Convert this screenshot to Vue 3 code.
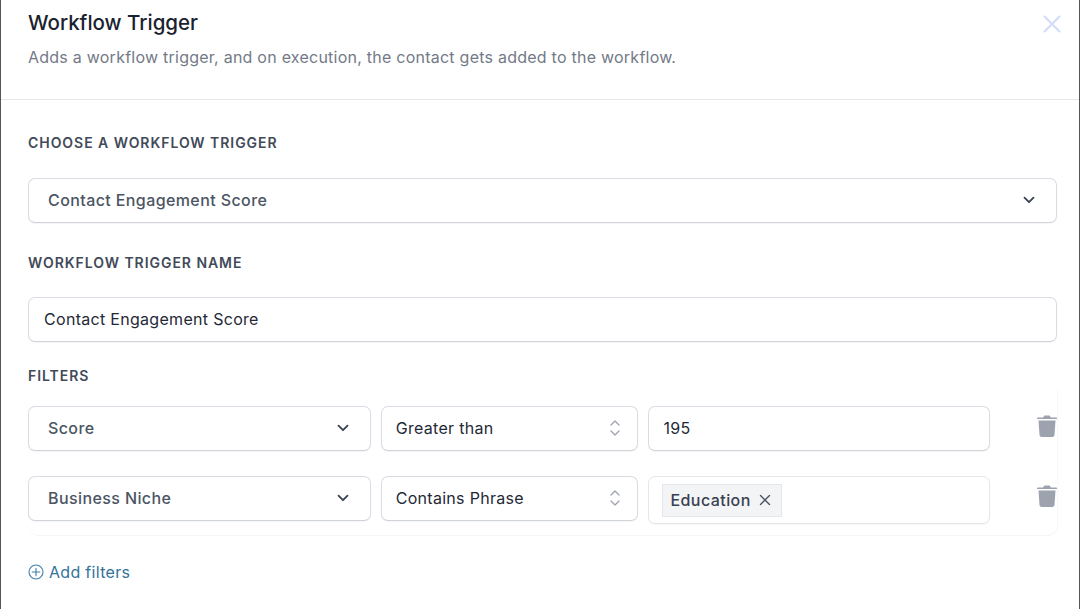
<script setup>
const filters = [
  { field: 'Score', op: 'Greater than', value: '195' },
  { field: 'Business Niche', op: 'Contains Phrase', tag: 'Education' },
]
</script>

<template>
  <div class="frame">
    <header class="head">
      <div>
        <h1 class="title">Workflow Trigger</h1>
        <p class="sub">Adds a workflow trigger, and on execution, the contact gets added to the workflow.</p>
      </div>
      <svg class="close" viewBox="0 0 18 18" width="18" height="18" fill="none" stroke="#d3dcf8" stroke-width="2" stroke-linecap="round">
        <path d="M1.5 1.5l15 15M16.5 1.5l-15 15" />
      </svg>
    </header>
    <main class="body">
      <div class="label first">CHOOSE A WORKFLOW TRIGGER</div>
      <div class="box select main-select">
        <span class="muted">Contact Engagement Score</span>
        <svg class="chev" viewBox="0 0 12 8" width="12" height="8" fill="none" stroke="#374151" stroke-width="1.8" stroke-linecap="round" stroke-linejoin="round"><path d="M1.5 1.7L6 6.2l4.5-4.5" /></svg>
      </div>
      <div class="label second">WORKFLOW TRIGGER NAME</div>
      <div class="box name-input">Contact Engagement Score</div>
      <div class="label third">FILTERS</div>
      <div class="filters">
        <div v-for="f in filters" :key="f.field" class="row">
          <div class="box select field">
            <span class="muted">{{ f.field }}</span>
            <svg class="chev" viewBox="0 0 12 8" width="12" height="8" fill="none" stroke="#374151" stroke-width="1.8" stroke-linecap="round" stroke-linejoin="round"><path d="M1.5 1.7L6 6.2l4.5-4.5" /></svg>
          </div>
          <div class="box op">
            <span>{{ f.op }}</span>
            <svg viewBox="0 0 10 18" width="10" height="18" fill="none" stroke="#9ca3af" stroke-width="1.3" stroke-linecap="round" stroke-linejoin="round"><path d="M1 6l4-4 4 4M1 12l4 4 4-4" /></svg>
          </div>
          <div class="box value" :class="{ 'value-tags': f.tag }">
            <span v-if="f.tag" class="tag">{{ f.tag }}
              <svg viewBox="0 0 12 12" width="12" height="12" fill="none" stroke="#4b5563" stroke-width="1.4" stroke-linecap="round"><path d="M1.5 1.5l9 9M10.5 1.5l-9 9" /></svg>
            </span>
            <span v-else>{{ f.value }}</span>
          </div>
          <svg class="trash" viewBox="0 0 20 24" width="20" height="24" fill="#9ca3af">
            <path d="M7.5 1.5h5L14 3.5h5.2c.5 0 .8.4.8.8v.7H0v-.7c0-.4.3-.8.8-.8H6z" />
            <path d="M1.5 6.5h17l-1 14.6c-.1 1-.9 1.9-2 1.9h-11c-1.100 0-1.900-.9-2-1.900z" />
          </svg>
        </div>
      </div>
      <div class="add">
        <svg viewBox="0 0 16 16" width="16" height="16" fill="none" stroke="#3f7ea6" stroke-width="1.100" stroke-linecap="round"><circle cx="8" cy="8" r="7" /><path d="M8 4.200v7.600M4.200 8h7.600" /></svg>
        <span>Add filters</span>
      </div>
    </main>
  </div>
</template>

<style scoped>
.frame {
  width: 1080px;
  height: 609px;
  box-sizing: border-box;
  border-left: 1px solid #555;
  border-right: 1px solid #555;
  background: #fff;
  font-family: Inter, "Liberation Sans", sans-serif;
  overflow: hidden;
}
.head {
  height: 100px;
  box-sizing: border-box;
  border-bottom: 1px solid #e5e7eb;
  padding: 10px 18px 0 27px;
  display: flex;
  justify-content: space-between;
  align-items: flex-start;
}
.title {
  margin: 0;
  font-size: 20.500px;
  line-height: 26px;
  font-weight: 500;
  color: #1a2230;
}
.sub {
  margin: 9px 0 0;
  font-size: 16px;
  line-height: 24px;
  letter-spacing: 0.24px;
  color: #737a87;
}
.close { margin-top: 5px; }
.body {
  padding: 0 22px 0 27px;
}
.label {
  font-size: 14px;
  line-height: 18px;
  font-weight: 600;
  letter-spacing: 0.95px;
  color: #414a59;
}
.first { padding-top: 34px; }
.second { margin-top: 31px; }
.third { margin-top: 25px; }
.box {
  box-sizing: border-box;
  height: 45px;
  padding-bottom: 1px;
  border: 1px solid #d9dce2;
  border-bottom-color: #cfd3da;
  border-radius: 7px;
  background: #fff;
  box-shadow: 0 1px 1px rgba(0, 0, 0, 0.04);
  display: flex;
  align-items: center;
  font-size: 16px;
  letter-spacing: 0.3px;
  color: #1f2937;
}
.select {
  justify-content: space-between;
  padding: 0 21px 1px 19px;
}
.muted { color: #4b5563; font-weight: 500; letter-spacing: 0.4px; }
.main-select { margin-top: 26px; }
.name-input { margin-top: 25px; padding-left: 15px; }
.filters {
  margin-top: 5px;
  margin-right: -1px;
  padding: 16px 0 11px;
  border-right: 1px solid #f6f7f8;
  border-bottom: 1px solid #f3f4f6;
  border-radius: 0 0 10px 10px;
  display: flex;
  flex-direction: column;
  gap: 25px;
}
.row {
  display: flex;
  align-items: flex-start;
  gap: 10px;
}
.field { width: 343px; }
.op {
  width: 258px;
  padding: 0 17px 1px 14px;
  justify-content: space-between;
}
.value {
  width: 342px;
  padding-left: 14px;
}
.value-tags {
  height: 48px;
  padding-left: 13px;
  padding-bottom: 0;
  border-color: #e5e7eb;
}
.tag {
  display: inline-flex;
  align-items: center;
  gap: 8px;
  height: 33px;
  box-sizing: border-box;
  padding: 0 10px 0 7px;
  background: #f3f4f6;
  border: 1px solid #e5e7eb;
  color: #374151;
  font-weight: 500;
  letter-spacing: 0.44px;
}
.trash { margin: 8px 0 0 37px; }
.add {
  margin-top: 26px;
  display: flex;
  align-items: center;
  gap: 5px;
  font-size: 16px;
  line-height: 20px;
  letter-spacing: 0.3px;
  color: #33729a;
}
</style>
